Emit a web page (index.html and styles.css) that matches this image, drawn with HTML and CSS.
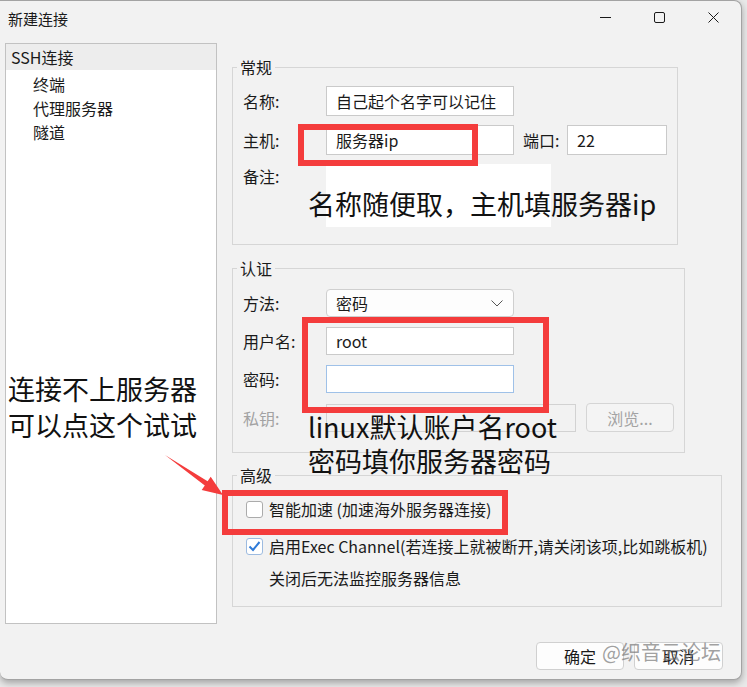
FILE: index.html
```html
<!DOCTYPE html>
<html lang="zh-CN">
<head>
    <meta charset="UTF-8">
    <meta name="viewport" content="width=device-width, initial-scale=1.0">
    <title>新建连接</title>
    <link rel="stylesheet" href="styles.css">
</head>
<body>
    <div class="screen">
        <div class="window">
            <header class="titlebar">
                <span class="titlebar__title">新建连接</span>
                <div class="titlebar__controls">
                    <span class="titlebar__btn">
                        <svg width="11" height="11" viewBox="0 0 11 11"><path d="M0 5.5h11" stroke="#1a1a1a" stroke-width="1"/></svg>
                    </span>
                    <span class="titlebar__btn">
                        <svg width="11" height="11" viewBox="0 0 11 11"><rect x="0.5" y="0.5" width="10" height="10" rx="1.5" fill="none" stroke="#1a1a1a" stroke-width="1"/></svg>
                    </span>
                    <span class="titlebar__btn">
                        <svg width="11" height="11" viewBox="0 0 11 11"><path d="M0.5 0.5l10 10M10.5 0.5l-10 10" stroke="#1a1a1a" stroke-width="1"/></svg>
                    </span>
                </div>
            </header>

            <div class="dialog">
                <ul class="tree">
                    <li class="tree__root">SSH连接</li>
                    <li class="tree__item tree__item--first">终端</li>
                    <li class="tree__item">代理服务器</li>
                    <li class="tree__item">隧道</li>
                </ul>

                <div class="settings">
                    <fieldset class="group group--general">
                        <legend>常规</legend>
                        <div class="form">
                            <span class="form__label">名称:</span>
                            <input class="input" type="text" value="自己起个名字可以记住" readonly>

                            <span class="form__label">主机:</span>
                            <div class="field field--host">
                                <input class="input" type="text" value="服务器ip" readonly>
                                <span class="field__label">端口:</span>
                                <input class="input input--port" type="text" value="22" readonly>
                            </div>

                            <span class="form__label form__label--top">备注:</span>
                            <div class="notes"></div>
                        </div>
                    </fieldset>

                    <fieldset class="group group--auth">
                        <legend>认证</legend>
                        <div class="form form--auth">
                            <span class="form__label">方法:</span>
                            <div class="select">
                                <span>密码</span>
                                <svg width="12" height="7" viewBox="0 0 12 7"><path d="M0.5 0.5l5.5 5.5 5.5-5.5" fill="none" stroke="#555" stroke-width="1"/></svg>
                            </div>

                            <span class="form__label">用户名:</span>
                            <input class="input" type="text" value="root" readonly>

                            <span class="form__label">密码:</span>
                            <input class="input input--focus" type="password" value="" readonly>

                            <span class="form__label form__label--disabled">私钥:</span>
                            <div class="field field--key">
                                <input class="input input--key" type="text" value="" disabled>
                                <button class="browse" disabled>浏览...</button>
                            </div>
                        </div>
                    </fieldset>

                    <fieldset class="group group--advanced">
                        <legend>高级</legend>
                        <div class="check-row">
                            <span class="check"></span>
                            <span>智能加速 (加速海外服务器连接)</span>
                        </div>
                        <div class="check-row check-row--second">
                            <span class="check check--on">
                                <svg width="15" height="15" viewBox="0 0 15 15"><path d="M2.5 7.5l3.5 3.5 6.5-8" fill="none" stroke="#2f7bd8" stroke-width="2"/></svg>
                            </span>
                            <span>启用Exec Channel(若连接上就被断开,请关闭该项,比如跳板机)</span>
                        </div>
                        <div class="check-row check-row--hint">关闭后无法监控服务器信息</div>
                    </fieldset>
                </div>
            </div>

            <footer class="actions">
                <button class="actions__btn">确定</button>
                <button class="actions__btn actions__btn--cancel">取消</button>
            </footer>
        </div>

        <!-- annotations drawn on top of the screenshot -->
        <div class="mark mark--host"></div>
        <div class="mark mark--login"></div>
        <div class="mark mark--speed"></div>

        <div class="note note--general">名称随便取，主机填服务器ip</div>
        <div class="note note--login">linux默认账户名root<br>密码填你服务器密码</div>
        <div class="note note--tip">连接不上服务器<br>可以点这个试试</div>

        <svg class="arrow" width="70" height="50" viewBox="0 0 70 50">
            <polygon points="5,5 47.6,31.3 50.7,26.8 63,45 41.7,40 44.8,35.5" fill="#f43c3c"/>
        </svg>

        <div class="watermark">@织音云论坛</div>
    </div>
</body>
</html>
```

FILE: styles.css
```css
body {
    margin: 0;
    background: #e9e9e9;
    font-family: "Noto Sans CJK SC", "Microsoft YaHei", sans-serif;
    color: #1a1a1a;
}

.screen {
    position: relative;
    width: 747px;
    height: 687px;
    overflow: hidden;
}

.window {
    width: 742px;
    height: 680px;
    box-sizing: border-box;
    display: flex;
    flex-direction: column;
    background: #f2f2f2;
    border: 1px solid #a3a3a3;
    border-left: 0;
    border-radius: 0 8px 8px 8px;
    box-shadow: 0 3px 7px rgba(0, 0, 0, 0.3);
}

/* title bar */

.titlebar {
    height: 35px;
    display: flex;
    align-items: center;
    justify-content: space-between;
    padding-left: 8px;
    font-size: 15px;
}

.titlebar__controls {
    display: flex;
    margin-right: 1px;
    margin-top: -3px;
}

.titlebar__btn {
    width: 54px;
    height: 32px;
    display: flex;
    align-items: center;
    justify-content: center;
}

/* body */

.dialog {
    display: flex;
    gap: 15px;
    padding: 7px 0 0 5px;
}

.tree {
    width: 212px;
    height: 581px;
    box-sizing: border-box;
    margin: 0;
    padding: 0;
    list-style: none;
    background: #fff;
    border: 1px solid #c2c2c2;
    font-size: 16px;
}

.tree__root {
    height: 26px;
    line-height: 26px;
    padding-left: 5px;
    background: #ededed;
}

.tree__item {
    height: 24px;
    line-height: 24px;
    padding-left: 27px;
}

.tree__item--first {
    margin-top: 2px;
}

.settings {
    padding-top: 14px;
}

.group {
    margin: 0;
    min-width: 0;
    box-sizing: border-box;
    padding: 9px 9px 17px 10px;
    border: 1px solid #d6d6d6;
    font-size: 16px;
}

.group legend {
    padding: 0 3px;
    margin-left: -6px;
    line-height: 20px;
}

.group--general {
    width: 446px;
}

.group--auth {
    width: 453px;
    margin-top: 13px;
    padding-top: 11px;
    padding-bottom: 20px;
}

.group--advanced {
    width: 490px;
    margin-top: 12px;
    padding-top: 10px;
    padding-bottom: 14px;
}

.form {
    display: grid;
    grid-template-columns: 83px auto;
    row-gap: 9px;
    align-items: center;
}

.form--auth {
    row-gap: 10px;
}

.form__label {
    line-height: 20px;
}

.form__label--top {
    align-self: start;
    padding-top: 2px;
}

.form__label--disabled {
    color: #a2a2a2;
}

.input {
    display: block;
    box-sizing: border-box;
    width: 188px;
    height: 30px;
    margin: 0;
    padding: 0 9px;
    border: 1px solid #cacaca;
    background: #fff;
    font-family: inherit;
    font-size: 16px;
    color: #1a1a1a;
    outline: none;
}

.form--auth .input {
    height: 28px;
}

.input--focus {
    border-color: #9fc1e8;
}

.input--port {
    width: 100px;
}

.input--key {
    width: 250px;
    height: 29px;
    background: #f2f2f2;
    border-color: #d2d2d2;
}

.field {
    display: flex;
    align-items: center;
}

.field__label {
    width: 44px;
    margin-left: 9px;
}

.field--key {
    gap: 10px;
}

.notes {
    width: 225px;
    height: 63px;
    background: #fff;
}

.select {
    width: 188px;
    height: 28px;
    box-sizing: border-box;
    display: flex;
    align-items: center;
    justify-content: space-between;
    padding: 0 10px 0 9px;
    border: 1px solid #cfcfcf;
    border-radius: 4px;
    background: #fdfdfd;
}

.browse {
    width: 88px;
    height: 29px;
    border: 1px solid #d5d5d5;
    border-radius: 4px;
    background: #f4f4f4;
    font-family: inherit;
    font-size: 16px;
    color: #a3a3a3;
}

.check-row {
    display: flex;
    align-items: center;
    gap: 6px;
    height: 28px;
    padding-left: 3px;
}

.check-row--second {
    margin-top: 9px;
}

.check-row--hint {
    margin-top: 4px;
    padding-left: 26px;
}

.check {
    width: 17px;
    height: 17px;
    box-sizing: border-box;
    display: flex;
    align-items: center;
    justify-content: center;
    border: 1px solid #ababab;
    border-radius: 3px;
    background: #fff;
}

.check--on {
    border-color: #9dbbe0;
}

/* footer */

.actions {
    display: flex;
    justify-content: flex-end;
    gap: 10px;
    padding: 18px 18px 0 0;
}

.actions__btn {
    width: 88px;
    height: 28px;
    border: 1px solid #d0d0d0;
    border-radius: 4px;
    background: #fdfdfd;
    font-family: inherit;
    font-size: 16px;
    color: #1a1a1a;
}

.actions__btn--cancel {
    width: 89px;
}

/* annotations */

.mark {
    position: absolute;
    box-sizing: border-box;
    border: 6px solid #f43c3c;
}

.mark--host {
    left: 298px;
    top: 124px;
    width: 180px;
    height: 42px;
}

.mark--login {
    left: 302px;
    top: 317px;
    width: 247px;
    height: 96px;
}

.mark--speed {
    left: 222px;
    top: 490px;
    width: 286px;
    height: 45px;
}

.note {
    position: absolute;
    font-size: 27px;
    line-height: 34px;
    color: #111;
    white-space: nowrap;
}

.note--general {
    left: 308px;
    top: 187px;
}

.note--login {
    left: 308px;
    top: 410px;
}

.note--tip {
    left: 8px;
    top: 371px;
    line-height: 36px;
}

.arrow {
    position: absolute;
    left: 160px;
    top: 450px;
}

.watermark {
    position: absolute;
    left: 602px;
    top: 640px;
    font-size: 20px;
    line-height: 24px;
    color: rgba(120, 120, 120, 0.7);
}
```
